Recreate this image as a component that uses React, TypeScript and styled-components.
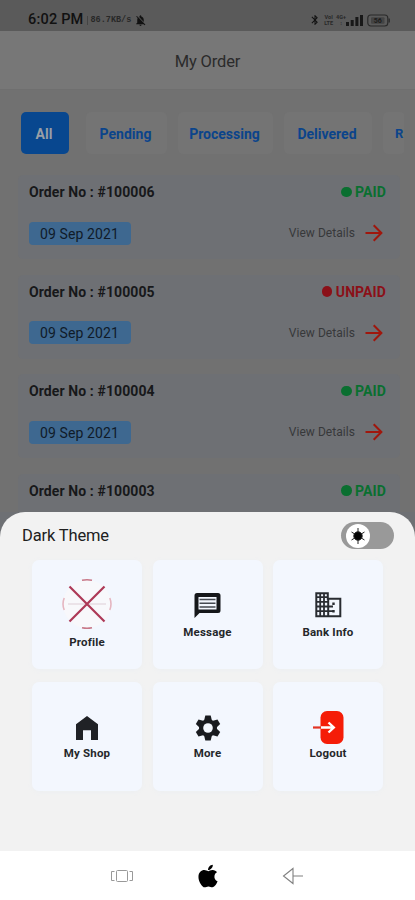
import React from 'react';
import styled, { createGlobalStyle } from 'styled-components';
import { MdBluetooth, MdNotificationsOff } from 'react-icons/md';
import { FaApple } from 'react-icons/fa';

const Global = createGlobalStyle`
  * { box-sizing: border-box; }
  html, body { margin: 0; padding: 0; }
  body { width: 415px; height: 900px; overflow: hidden; background: #717171; font-family: Roboto, "Noto Sans", sans-serif; }
  svg { display: block; flex: none; }
`;

const Phone = styled.div`
  width: 415px;
  height: 900px;
  display: flex;
  flex-direction: column;
  overflow: hidden;
  background: #717171;
`;

const StatusBar = styled.header`
  flex: none;
  height: 31px;
  padding: 9px 24px 0 28px;
  display: flex;
  align-items: center;
  justify-content: space-between;
  background: #5a5a5a;
  color: #111;
`;
const StatusGroup = styled.div<{ $gap: number }>`
  display: flex;
  align-items: center;
  gap: ${p => p.$gap}px;
`;
const Clock = styled.span`
  font-size: 14.5px;
  line-height: 20px;
  font-weight: 500;
  letter-spacing: 0.2px;
`;
const Speed = styled.span`
  height: 9px;
  padding-left: 3px;
  border-left: 1px solid #444;
  font: 700 8.5px/9px "Liberation Mono", monospace;
  color: #282828;
`;
const Tiny = styled.span`
  font-size: 5.5px;
  line-height: 6px;
  font-weight: 700;
  text-align: center;
  color: #282828;
`;

const TitleBar = styled.h1`
  flex: none;
  height: 59px;
  margin: 0;
  padding-top: 2px;
  display: flex;
  align-items: center;
  justify-content: center;
  background: #777;
  border-bottom: 1px solid #6f6f6f;
  font-size: 16.5px;
  font-weight: 400;
  letter-spacing: -0.15px;
  color: #2b2b2b;
`;

const Tabs = styled.nav`
  flex: none;
  margin: 22px 11px 0 21px;
  display: flex;
  gap: 11px;
  overflow: hidden;
`;
const Tab = styled.button<{ $width: number; $active?: boolean }>`
  flex: none;
  width: ${p => p.$width}px;
  height: 42px;
  margin: 0 ${p => (p.$active ? 6 : 0)}px 0 0;
  padding: 2px 2px 0 0;
  border: 0;
  border-radius: 5px;
  background: ${p => (p.$active ? '#08478f' : '#747474')};
  color: ${p => (p.$active ? '#999fa6' : '#0b448b')};
  font: 700 14px/20px Roboto, sans-serif;
`;
const ClippedTab = styled(Tab)`
  width: 22px;
  padding: 2px 0 0 12px;
  font-size: 13px;
  text-align: left;
`;

const Orders = styled.main`
  flex: none;
  height: 358px;
  padding: 21px 15px 0 18px;
  display: flex;
  flex-direction: column;
  gap: 15.5px;
`;
const OrderCard = styled.article<{ $open: boolean }>`
  flex: none;
  height: ${p => (p.$open ? 84 : 38)}px;
  padding: 5.5px 14px 0 11px;
  border-radius: ${p => (p.$open ? '5px' : '5px 5px 0 0')};
  background: #6e7074;
`;
const Line = styled.div<{ $top?: number }>`
  height: 23px;
  margin-top: ${p => p.$top ?? 0}px;
  display: flex;
  align-items: center;
  justify-content: space-between;
`;
const OrderNo = styled.span`
  font-size: 14px;
  font-weight: 700;
  letter-spacing: 0.1px;
  color: #17181a;
`;
const Payment = styled.span<{ $paid: boolean }>`
  display: flex;
  align-items: center;
  gap: 3.5px;
  font-size: 14px;
  font-weight: 700;
  letter-spacing: 0.1px;
  color: ${p => (p.$paid ? '#0a6f30' : '#8b1018')};
  &::before {
    content: '';
    width: 10.5px;
    height: 10.5px;
    border-radius: 50%;
    background: currentColor;
  }
`;
const DateChip = styled.span`
  width: 102px;
  height: 23px;
  border-radius: 4px;
  background: #3e6890;
  font-size: 14px;
  line-height: 24px;
  letter-spacing: 0.1px;
  text-align: center;
  text-indent: -1px;
  color: #101b29;
`;
const Details = styled.span`
  display: flex;
  align-items: center;
  gap: 10px;
  padding-right: 3px;
  font-size: 12px;
  letter-spacing: 0.05px;
  color: #37383a;
`;

const SheetFrame = styled.div`
  flex: none;
  height: 339px;
  background: #6e7074;
`;
const Sheet = styled.section`
  height: 100%;
  padding: 10px 21px 0 22px;
  border-radius: 25px 25px 0 0;
  background: #f2f2f2;
`;
const ThemeRow = styled.div`
  height: 27px;
  display: flex;
  align-items: center;
  justify-content: space-between;
  font-size: 16.5px;
  letter-spacing: -0.15px;
  color: #202020;
`;
const Toggle = styled.div`
  width: 53px;
  height: 27px;
  padding-left: 5px;
  border-radius: 14px;
  display: flex;
  align-items: center;
  background: #999;
`;
const Knob = styled.div`
  width: 24px;
  height: 24px;
  border-radius: 50%;
  display: grid;
  place-items: center;
  background: #fff;
`;
const Tiles = styled.div`
  margin: 11px 0 0 10px;
  display: grid;
  grid-template-columns: repeat(3, 110px);
  grid-auto-rows: 109px;
  gap: 12.5px 10.5px;
`;
const Tile = styled.button`
  padding: 0;
  border: 0;
  border-radius: 7px;
  background: #f3f7fe;
  box-shadow: 0 1px 5px #eceff2;
  display: flex;
  flex-direction: column;
  align-items: center;
  justify-content: center;
  color: #15171a;
`;
const TileIcon = styled.span<{ $size: number }>`
  height: ${p => p.$size}px;
  display: flex;
  align-items: center;
`;
const TileLabel = styled.span<{ $top: number }>`
  margin-top: ${p => p.$top}px;
  font: 700 11.5px/16px Roboto, sans-serif;
  letter-spacing: 0.18px;
  color: #25272a;
`;

const NavBar = styled.footer`
  flex: none;
  height: 49px;
  padding: 0 111px 0 110px;
  display: flex;
  align-items: center;
  justify-content: space-between;
  background: #fff;
`;

const Signal = () => (
  <svg width="18" height="12" viewBox="0 0 18 12" fill="#181818">
    <rect x="0" y="8" width="3" height="4" /><rect x="4.7" y="6" width="3" height="6" />
    <rect x="9.4" y="3" width="3" height="9" /><rect x="14" y="1" width="3" height="11" />
  </svg>
);

const Battery = () => (
  <svg width="24" height="13" viewBox="0 0 24 13">
    <rect x=".8" y="1" width="20" height="11" rx="3" fill="none" stroke="#292929" strokeWidth="1.1" />
    <path d="M22.2 4.5v4" stroke="#292929" strokeWidth="1.3" />
    <rect x="4" y="3.2" width="13.5" height="6.6" rx="1" fill="#444" />
    <text x="10.7" y="9" textAnchor="middle" fontFamily="Roboto" fontSize="7" fontWeight="700" fill="#1c1c1c">56</text>
  </svg>
);

const RedArrow = () => (
  <svg width="18" height="18" viewBox="0 0 18 18" fill="none" stroke="#a0170d" strokeWidth="2">
    <path d="M.5 9h15.5M8.7 1.2 16.4 9l-7.7 7.8" />
  </svg>
);

const Sun = () => (
  <svg width="18" height="18" viewBox="0 0 18 18" fill="#050505" stroke="#222" strokeWidth="1">
    <path d="M9 1v16M2.5 5l13 8M2.5 13l13-8" />
    <circle cx="9" cy="9" r="4.2" />
  </svg>
);

const ProfileMark = () => (
  <svg width="50" height="50" viewBox="0 0 50 50" fill="none">
    <circle cx="25" cy="25" r="24" fill="#f8f8fb" />
    <path d="M6 25h38" stroke="#deced6" strokeWidth="1" />
    <path d="M20 1.3Q25 .3 30 1.3M20 48.7Q25 49.7 30 48.7" stroke="#c87888" strokeWidth="1.4" />
    <path d="M2.2 19Q-.2 25 2.2 31M47.8 19Q50.2 25 47.8 31" stroke="#e5b6c0" strokeWidth="1.6" />
    <path d="M7.5 7.5l35 35M42.5 7.5l-35 35" stroke="#ad3957" strokeWidth="2.2" />
  </svg>
);

const MessageMark = () => (
  <svg width="27" height="27" viewBox="0 0 27 27">
    <path fillRule="evenodd" fill="#15171a" d="M3 1h21a2.5 2.5 0 0 1 2.5 2.5v15A2.5 2.5 0 0 1 24 21H5.5L.5 26V3.500A2.500 2.500 0 0 1 3 1zM4.500 5v12.500h18V5z" />
    <path d="M5.500 7.500h16M5.500 11.200h16M5.500 15h16" stroke="#454950" strokeWidth="1.500" />
  </svg>
);

const BankMark = () => (
  <svg width="27" height="26" viewBox="0 0 27 26" fill="none">
    <path d="M1.300 1.300h11.500v5.500h12.500v17.500h-24z" stroke="#292c31" strokeWidth="2" />
    <path d="M5.200 1v23M9 1v23M1 5.200h12M1 9.800h12.500M1 14.500h17M1 19.200h17" stroke="#292c31" strokeWidth="1.800" />
    <path d="M13.200 7v17" stroke="#292c31" strokeWidth="2" />
    <path d="M18.500 10.500v2.500M18.500 18v2.500" stroke="#292c31" strokeWidth="2.400" />
  </svg>
);

const GearMark = () => (
  <svg width="28" height="28" viewBox="-14 -14 28 28" fill="#191b1f">
    {[0, 60, 120].map(angle => (
      <path key={angle} transform={`rotate(${angle})`} d="M-2.700-12.500h5.400l1.300 5.500v14l-1.300 5.500h-5.400L-4 7V-7z" />
    ))}
    <circle r="9" />
    <circle r="4.800" fill="#f3f7fe" />
  </svg>
);

const HomeMark = () => (
  <svg width="24" height="26" viewBox="0 0 24 26" fill="#202226">
    <path d="M1 9.200 12 1l11 8.200V25h-7v-9.800H8V25H1z" />
  </svg>
);

const LogoutMark = () => (
  <svg width="40" height="33" viewBox="0 0 40 33" fill="none">
    <rect x="12.500" y="0" width="23" height="33" rx="6.500" fill="#f51d08" />
    <path d="M5 16.500h8" stroke="#e33424" strokeWidth="2.200" />
    <path d="M13 16.500h13M20.500 11.500l5.300 5-5.300 5" stroke="#fff" strokeWidth="2.400" />
  </svg>
);

const Recents = () => (
  <svg width="24" height="14" viewBox="0 0 24 14" fill="none" stroke="#999">
    <rect x="6.500" y="1.500" width="11" height="11" rx="1" />
    <path d="M4.500 2.500h-3v9h3M19.500 2.500h3v9h-3" />
  </svg>
);

const Back = () => (
  <svg width="22" height="18" viewBox="0 0 22 18" fill="none" stroke="#808080" strokeWidth="1.100">
    <path d="M11 1.500v15L1.500 9zM11 9h10" />
  </svg>
);

const orders = [
  { id: '100006', paid: true, open: true },
  { id: '100005', paid: false, open: true },
  { id: '100004', paid: true, open: true },
  { id: '100003', paid: true, open: false },
];

const tiles = [
  { label: 'Profile', size: 50, top: 5, icon: <ProfileMark /> },
  { label: 'Message', size: 31, top: 3, icon: <MessageMark /> },
  { label: 'Bank Info', size: 31, top: 3, icon: <BankMark /> },
  { label: 'My Shop', size: 32, top: 1, icon: <HomeMark /> },
  { label: 'More', size: 32, top: 1, icon: <GearMark /> },
  { label: 'Logout', size: 32, top: 1, icon: <LogoutMark /> },
];

export default function App() {
  return (
    <>
      <Global />
      <Phone>
        <StatusBar>
          <StatusGroup $gap={3}>
            <Clock>6:02 PM</Clock>
            <Speed>86.7KB/s</Speed>
            <MdNotificationsOff size={13} />
          </StatusGroup>
          <StatusGroup $gap={3}>
            <MdBluetooth size={12} />
            <Tiny>VoI<br />LTE</Tiny>
            <StatusGroup $gap={0}><Tiny>4G+<br />↕</Tiny><Signal /></StatusGroup>
            <Battery />
          </StatusGroup>
        </StatusBar>
        <TitleBar>My Order</TitleBar>
        <Tabs>
          <Tab $width={48} $active>All</Tab>
          <Tab $width={81}>Pending</Tab>
          <Tab $width={95}>Processing</Tab>
          <Tab $width={88}>Delivered</Tab>
          <ClippedTab $width={22}>R</ClippedTab>
        </Tabs>
        <Orders>
          {orders.map(order => (
            <OrderCard key={order.id} $open={order.open}>
              <Line>
                <OrderNo>Order No : #{order.id}</OrderNo>
                <Payment $paid={order.paid}>{order.paid ? 'PAID' : 'UNPAID'}</Payment>
              </Line>
              {order.open && (
                <Line $top={18}>
                  <DateChip>09 Sep 2021</DateChip>
                  <Details>View Details<RedArrow /></Details>
                </Line>
              )}
            </OrderCard>
          ))}
        </Orders>
        <SheetFrame>
          <Sheet>
            <ThemeRow>
              Dark Theme
              <Toggle><Knob><Sun /></Knob></Toggle>
            </ThemeRow>
            <Tiles>
              {tiles.map(tile => (
                <Tile key={tile.label}>
                  <TileIcon $size={tile.size}>{tile.icon}</TileIcon>
                  <TileLabel $top={tile.top}>{tile.label}</TileLabel>
                </Tile>
              ))}
            </Tiles>
          </Sheet>
        </SheetFrame>
        <NavBar>
          <Recents />
          <FaApple size={26} color="#000" />
          <Back />
        </NavBar>
      </Phone>
    </>
  );
}
